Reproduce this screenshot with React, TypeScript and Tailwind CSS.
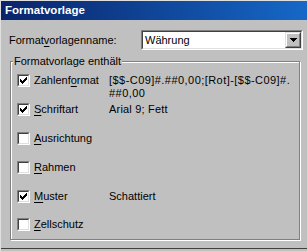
const font = { fontFamily: '"Liberation Sans", Arial, sans-serif' }

type Row = {
  label: string
  mnemonic: number
  checked: boolean
  value: string[]
  height: string
  tracking: string
}

const rows: Row[] = [
  {
    label: "Zahlenformat",
    mnemonic: 7,
    checked: true,
    value: ["[$$-C09]#.##0,00;[Rot]-[$$-C09]#.", "##0,00"],
    height: "h-[29px]",
    tracking: "tracking-[0.45px]",
  },
  {
    label: "Schriftart",
    mnemonic: 0,
    checked: true,
    value: ["Arial 9; Fett"],
    height: "h-[29px]",
    tracking: "tracking-[0.2px]",
  },
  { label: "Ausrichtung", mnemonic: 0, checked: false, value: [], height: "h-[29px]", tracking: "" },
  { label: "Rahmen", mnemonic: 0, checked: false, value: [], height: "h-[29px]", tracking: "" },
  { label: "Muster", mnemonic: 0, checked: true, value: ["Schattiert"], height: "h-[28px]", tracking: "" },
  { label: "Zellschutz", mnemonic: 0, checked: false, value: [], height: "h-[28px]", tracking: "" },
]

function Mnemonic({ text, index }: { text: string; index: number }) {
  return (
    <>
      {text.slice(0, index)}
      <span className="underline underline-offset-[2px]">{text[index]}</span>
      {text.slice(index + 1)}
    </>
  )
}

function CheckBox({ checked }: { checked: boolean }) {
  return (
    <div className="h-[13px] w-[13px] shrink-0 border border-t-[#808080] border-l-[#808080] border-b-white border-r-white">
      <div className="relative h-[11px] w-[11px] border border-t-[#404040] border-l-[#404040] border-b-[#dfdfdf] border-r-[#dfdfdf] bg-white">
        {checked && (
          <svg
            width="9"
            height="9"
            viewBox="0 0 9 9"
            className="absolute left-0 top-0"
            shapeRendering="crispEdges"
          >
            {[2, 3, 4, 3, 2, 1, 0].map((y, i) => (
              <rect key={i} x={1 + i} y={1 + y} width="1" height="3" fill="#000" />
            ))}
          </svg>
        )}
      </div>
    </div>
  )
}

function ComboBox() {
  return (
    <div className="h-[20px] w-[162px] border border-t-[#808080] border-l-[#808080] border-b-white border-r-white">
      <div className="flex h-[18px] w-[160px] border border-t-[#404040] border-l-[#404040] border-b-[#dfdfdf] border-r-[#dfdfdf] bg-white">
        <span className="flex-1 pl-[2px] text-[11px] leading-[16px] text-black">
          Währung
        </span>
        <div className="h-[16px] w-[16px] border border-t-[#dfdfdf] border-l-[#dfdfdf] border-b-[#404040] border-r-[#404040] bg-[#c0c0c0]">
          <div className="flex h-[14px] w-[14px] items-center justify-center border border-t-white border-l-white border-b-[#808080] border-r-[#808080]">
            <svg width="7" height="4" viewBox="0 0 7 4" shapeRendering="crispEdges">
              <path d="M0 0h7v1H0zM1 1h5v1H1zM2 2h3v1H2zM3 3h1v1H3z" fill="#000" />
            </svg>
          </div>
        </div>
      </div>
    </div>
  )
}

export default function App() {
  return (
    <div
      style={font}
      className="flex h-[251px] w-[307px] flex-col overflow-hidden border-l border-t border-[#dfdfdf] bg-[#c0c0c0] text-[11px] text-black"
    >
      <div className="flex h-[19px] items-center bg-gradient-to-r from-[#0a246a] to-[#1668c8] pl-[4px]">
        <span className="text-[11.5px] font-bold leading-[19px] text-white">
          Formatvorlage
        </span>
      </div>

      <div className="mt-[10px] flex items-center pl-[8px]">
        <span className="w-[132px] leading-[20px]">
          <Mnemonic text="Formatvorlagenname:" index={6} />
        </span>
        <ComboBox />
      </div>

      <div className="relative ml-[9px] mt-[11px] h-[179px] w-[290px] border border-[#808080] shadow-[inset_1px_1px_0_#fff,1px_1px_0_#fff]">
        <span className="absolute left-[2px] top-[-7px] bg-[#c0c0c0] px-[1px] leading-[13px]">
          Formatvorlage enthält
        </span>

        <div className="flex flex-col pl-[6px] pt-[12px]">
          {rows.map((row) => (
            <div key={row.label} className={`flex items-start ${row.height}`}>
              <CheckBox checked={row.checked} />
              <span className="ml-[4px] w-[75px] leading-[13px]">
                <Mnemonic text={row.label} index={row.mnemonic} />
              </span>
              <div className={`flex flex-col leading-[13px] ${row.tracking}`}>
                {row.value.map((line) => (
                  <span key={line}>{line}</span>
                ))}
              </div>
            </div>
          ))}
        </div>
      </div>

      <div className="mt-[8px] h-[1px] w-full bg-[#404040]" />
    </div>
  )
}
